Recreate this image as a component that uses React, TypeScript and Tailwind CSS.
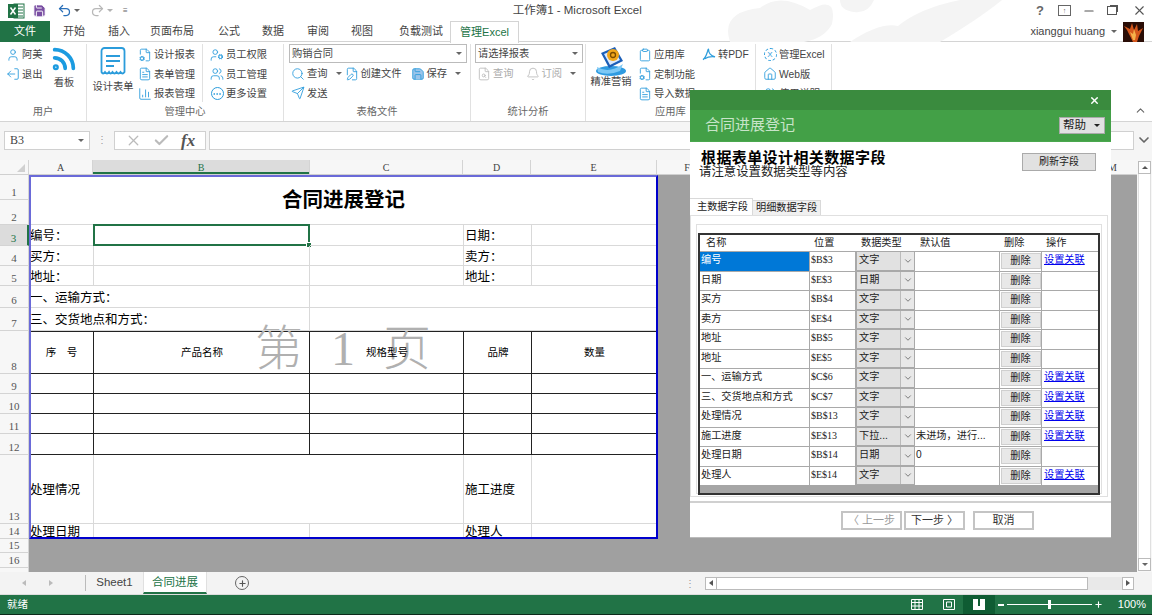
import React from 'react';
import {
  BarChart3, Bell, Check, ChevronDown, ChevronUp, Clipboard, Ellipsis, FileCog, FilePen, FileSearch, FileText, Home,
  LogOut, Minus, Plus, Redo2, Rss, Save, Search, Send, Undo2, User, Users, UserCog, X,
} from 'lucide-react';

const font = { cjk: "font-['Liberation_Sans','Noto_Sans_CJK_SC',sans-serif]" };
const blue = '#2b9cdb';

const Caret = ({ className = '' }: { className?: string }) => (
  <span className={`inline-block w-0 h-0 border-x-[3px] border-x-transparent border-t-[3px] border-t-[#666] ${className}`} />
);

const ExcelLogo = () => (
  <svg width="18" height="16" viewBox="0 0 18 16">
    <rect x="7" y="1" width="10" height="14" fill="#fff" stroke="#217346" />
    <path d="M11 4h5M11 7h5M11 10h5M11 13h5" stroke="#217346" />
    <rect x="1" y="1" width="10" height="14" fill="#217346" />
    <path d="M3.5 4.5l5 7M8.5 4.5l-5 7" stroke="#fff" strokeWidth="1.5" />
  </svg>
);

const FormIcon = () => (
  <svg width="26" height="30" viewBox="0 0 26 30" fill="none" stroke={blue} strokeWidth="1.8">
    <path d="M1.5 25V4a3 3 0 0 1 3-3h17a3 3 0 0 1 3 3v21q-2 3-4 0q-2 3-4 0q-2 3-4 0q-2 3-3.500 0q-2 3-4 0q-2 3-3.500 0z" />
    <path d="M6 9h14M6 14h14M6 19h8" />
  </svg>
);

const MailIcon = () => (
  <svg width="36" height="32" viewBox="0 0 36 32">
    <ellipse cx="18" cy="26" rx="15" ry="5" fill="#2f9be0" />
    <path d="M8 8l14-6 8 14-14 7z" fill="#1c5fb8" />
    <path d="M11 9l10-4 6 10-10 5z" fill="#dbeafe" />
    <circle cx="20" cy="10" r="6" fill="#f2a71b" />
    <circle cx="20" cy="10" r="2.500" fill="none" stroke="#7a4b00" strokeWidth="1.3" />
    <path d="M4 22q12 7 26-3l-3 7q-12 5-22 1z" fill="#7cc8f5" />
  </svg>
);

const PdfIcon = () => (
  <svg width="15" height="15" viewBox="0 0 15 15" fill="none" stroke={blue} strokeWidth="1.3">
    <path d="M1 13c2-1 3.500-4 5-9 .5-2 1-3 1-2 0 3 2 7 7 8-4-.5-8 0-11 2" />
  </svg>
);

const Clouds = () => (
  <svg className="absolute left-[720px] top-0" width="300" height="42" viewBox="0 0 300 42" fill="#f4f4f4">
    <path d="M10 42Q0 12 40 8Q60-8 90 10Q118-6 112 24Q105 38 84 42z" />
    <path d="M130 42Q160 22 178 26Q200 8 240 0L282 0Q260 18 220 42z" />
    <path d="M120 0h34q-6 14-20 12q-14-2-14-12z" />
  </svg>
);

const Avatar = () => (
  <svg width="21" height="20" viewBox="0 0 21 20">
    <rect width="21" height="20" fill="#2a0d06" />
    <path d="M10 20L4 8 1 4l6 3 2-6 2 7 3-6 1 7 5-3-4 8-2 6z" fill="#d4571c" />
    <path d="M10 18L7 10l3 2 1-5 2 6-1 5z" fill="#f6b24a" />
  </svg>
);

const Item = ({ icon, label, muted = false, caret = false, className = '' }: { icon: React.ReactNode; label: string; muted?: boolean; caret?: boolean; className?: string }) => (
  <div className={`flex items-center h-[19.500px] gap-[2px] whitespace-nowrap ${muted ? 'text-[#aaa]' : 'text-[#444]'} ${className}`}>
    <span className="w-[14px] h-[14px] flex items-center justify-center shrink-0">{icon}</span>
    <span>{label}</span>
    {caret && <Caret className="ml-[6px]" />}
  </div>
);

const Group = ({ label, className, children }: { label: string; className: string; children: React.ReactNode }) => (
  <div className={`h-full flex flex-col border-r border-[#e1e1e1] shrink-0 ${className}`}>
    <div className="flex-1 flex min-h-0">{children}</div>
    <div className="h-[17px] text-center text-[10.250px] text-[#666] leading-[15px]">{label}</div>
  </div>
);

const Combo = ({ text, className }: { text: string; className: string }) => (
  <div className={`h-[19px] border border-[#bbb] bg-white flex items-center justify-between px-[2px] text-[#444] ${className}`}>
    <span>{text}</span>
    <Caret className="mr-[2px]" />
  </div>
);

const ic = { size: 14, color: blue, strokeWidth: 1.5 };

const Ribbon = () => (
  <div className="h-[80px] flex bg-white border-b border-[#d4d4d4] text-[10.250px] pt-[2px] relative">
    <Group label="用户" className="w-[87px]">
      <div className="pl-[6px] pt-[1px] w-[50px]">
        <Item icon={<User {...ic} />} label="阿美" />
        <Item icon={<LogOut {...ic} className="rotate-180" />} label="退出" />
      </div>
      <div className="flex flex-col items-center pt-[1px] text-[#444]">
        <Rss size={28} color="#1b9be0" strokeWidth={3.200} />
        <span className="mt-[2px]">看板</span>
      </div>
    </Group>
    <Group label="管理中心" className="w-[197px]">
      <div className="w-[50px] ml-[1px] flex flex-col items-center pt-[3px] text-[#444]">
        <FormIcon />
        <span className="mt-[2px]">设计表单</span>
      </div>
      <div className="w-[68px] ml-[-3px] pl-[3px] pt-[1px] border-r border-[#e1e1e1] h-[58px]">
        <Item icon={<FileCog {...ic} />} label="设计报表" />
        <Item icon={<FileText {...ic} />} label="表单管理" />
        <Item icon={<BarChart3 {...ic} />} label="报表管理" />
      </div>
      <div className="pl-[7px] pt-[1px]">
        <Item icon={<UserCog {...ic} />} label="员工权限" />
        <Item icon={<Users {...ic} />} label="员工管理" />
        <Item icon={<span className="w-[13px] h-[13px] rounded-full border border-[#2b9cdb] flex items-center justify-center"><Ellipsis size={10} color={blue} /></span>} label="更多设置" />
      </div>
    </Group>
    <Group label="表格文件" className="w-[187px]">
      <div className="pl-[5px]">
        <Combo text="购销合同" className="w-[178px]" />
        <div className="flex pl-[2px] mt-[1px] gap-[3px]">
          <Item icon={<Search {...ic} />} label="查询" caret />
          <Item icon={<FilePen {...ic} />} label="创建文件" />
          <Item icon={<Save {...ic} fill="#9cc5ea" />} label="保存" caret className="ml-[6px]" />
        </div>
        <Item icon={<Send {...ic} />} label="发送" className="pl-[2px]" />
      </div>
    </Group>
    <Group label="统计分析" className="w-[115px]">
      <div className="pl-[4px]">
        <Combo text="请选择报表" className="w-[108px]" />
        <div className="flex pl-[2px] mt-[1px] gap-[12px]">
          <Item muted icon={<FileSearch size={14} color="#bbb" strokeWidth={1.500} />} label="查询" />
          <Item muted icon={<Bell size={14} color="#bbb" strokeWidth={1.500} />} label="订阅" caret />
        </div>
      </div>
    </Group>
    <Group label="应用库" className="w-[170px]">
      <div className="w-[50px] flex flex-col items-center pt-[1px] text-[#444]">
        <MailIcon />
        <span className="mt-[-3px]">精准营销</span>
      </div>
      <div className="w-[66px] pl-[2px] pt-[1px]">
        <Item icon={<Clipboard {...ic} />} label="应用库" />
        <Item icon={<FileCog {...ic} />} label="定制功能" />
        <Item icon={<FileText {...ic} />} label="导入数据" />
      </div>
      <div className="pt-[1px]">
        <Item icon={<PdfIcon />} label="转PDF" />
      </div>
    </Group>
    <Group label="管理" className="w-[76px]">
      <div className="pl-[7px] pt-[1px]">
        <Item icon={<span className="w-[13px] h-[13px] rounded-full border border-dashed border-[#2b9cdb] text-[8px] leading-[11px] text-center text-[#2b9cdb]">X</span>} label="管理Excel" />
        <Item icon={<Home {...ic} />} label="Web版" />
        <Item icon={<Users {...ic} />} label="使用说明" />
      </div>
    </Group>
    <ChevronUp size={13} color="#666" className="absolute left-[1134px] top-[62px]" />
  </div>
);

const tabs = [
  ['开始', 'w-[48px]'], ['插入', 'w-[42px]'], ['页面布局', 'w-[64px]'], ['公式', 'w-[50px]'],
  ['数据', 'w-[38px]'], ['审阅', 'w-[52px]'], ['视图', 'w-[36px]'], ['负载测试', 'w-[70px] pl-[12px]'],
];

const TitleBar = () => (
  <div className="relative h-[42px] bg-white border-b border-[#d4d4d4] shrink-0">
    <Clouds />
    <div className="relative h-[21px] flex items-center">
      <span className="ml-[7px]"><ExcelLogo /></span>
      <span className="ml-[7px]"><Save size={15} color="#fff" fill="#7a4fa3" strokeWidth={1.500} /></span>
      <span className="ml-[10px]"><Undo2 size={15} color="#2a6fb8" strokeWidth={2} /></span>
      <Caret className="ml-[2px]" />
      <span className="ml-[10px]"><Redo2 size={15} color="#b8b8b8" strokeWidth={2} /></span>
      <Caret className="ml-[2px] opacity-50" />
      <span className="ml-[10px] text-[8px] text-[#666] leading-none">≡</span>
      <span className="ml-[385px] text-[11.500px] text-[#444] whitespace-nowrap">工作簿1 - Microsoft Excel</span>
      <span className="ml-auto flex items-center text-[#555] gap-[11px] pr-[5px]">
        <span className="text-[13px] font-bold text-[#666] w-[14px] text-center">?</span>
        <span className="w-[13px] h-[11px] border border-[#666] flex items-center justify-center text-[7px] leading-none">↑</span>
        <Minus size={14} color="#555" />
        <span className="w-[10px] h-[9px] border border-[#555] shadow-[2px_-2px_0_-1px_#555]" />
        <X size={15} color="#555" strokeWidth={1.800} className="ml-[4px]" />
      </span>
    </div>
    <div className="relative h-[21px] flex items-stretch text-[11px] text-[#444]">
      <div className="w-[50px] bg-[#217346] text-white flex items-center justify-center">文件</div>
      {tabs.map(([t, w]) => (
        <div key={t} className={`${w} flex items-center justify-center`}>{t}</div>
      ))}
      <div className="w-[69px] bg-white border border-b-0 border-[#d4d4d4] text-[#217346] flex items-center justify-center z-10 h-[22px]">管理Excel</div>
      <div className="ml-auto flex items-center pr-[8px] text-[11px] text-[#444]">
        <span>xianggui huang</span>
        <Caret className="ml-[6px] mr-[6px]" />
        <Avatar />
      </div>
    </div>
  </div>
);

const FormulaBar = () => (
  <div className="h-[38px] bg-[#f5f5f5] flex items-center pl-[4px] pb-[2px] shrink-0 text-[#444]">
    <div className="w-[86px] h-[19px] bg-white border border-[#d0d0d0] flex items-center justify-between px-[5px] text-[12px] font-['Liberation_Serif',serif]">
      <span>B3</span>
      <Caret />
    </div>
    <div className="w-[24px] text-center text-[10px] text-[#999] leading-none">⋮</div>
    <div className="w-[92px] h-[19px] bg-white border border-[#d0d0d0] flex items-center justify-around px-[4px]">
      <X size={17} color="#bbb" strokeWidth={1.800} />
      <Check size={17} color="#bbb" strokeWidth={3} />
      <span className="font-['Liberation_Serif',serif] italic text-[17px] font-bold leading-none text-[#555]">fx</span>
    </div>
    <div className="ml-[3px] w-[926px] h-[19px] bg-white border border-[#d0d0d0]" />
    <ChevronDown size={16} color="#666" strokeWidth={2.500} className="ml-[2px]" />
  </div>
);

const colW = { a: 'w-[65px]', b: 'w-[216px]', c: 'w-[154px]', d: 'w-[68px]', e: 'w-[125px]' };

const Cell = ({ w, text, black, center, small, children }: { w: string; text?: string; black?: boolean; center?: boolean; small?: boolean; children?: React.ReactNode }) => (
  <div className={`${w} shrink-0 relative border-r border-b flex items-center whitespace-nowrap pl-[1px] ${black ? 'border-[#222]' : 'border-[#d9d9d9]'} ${center ? 'justify-center' : 'pt-[3px]'} ${small ? 'text-[10.500px]' : 'text-[12.500px]'}`}>
    {text}
    {children}
  </div>
);

const rowNums = [
  ['1', 'h-[25px]'], ['2', 'h-[25px]'], ['3', 'h-[21px]'], ['4', 'h-[20px]'], ['5', 'h-[20px]'], ['6', 'h-[22px]'], ['7', 'h-[23px]'],
  ['8', 'h-[43px]'], ['9', 'h-[20px]'], ['10', 'h-[20px]'], ['11', 'h-[20px]'], ['12', 'h-[21px]'], ['13', 'h-[69px]'], ['14', 'h-[15px]'], ['15', 'h-[14px]'], ['16', 'h-[15px]'],
];

const Sheet = () => (
  <div className="flex-1 flex min-h-0">
    <div className="flex-1 flex flex-col min-w-0 bg-[#a0a0a0]">
      <div className="h-[15px] flex bg-[#f7f7f7] text-[10px] font-['Liberation_Serif',serif] text-[#444] shrink-0 border-b border-[#d0d0d0]">
        <div className="w-[29px] border-r border-[#d4d4d4] flex justify-end items-end pr-[3px] pb-[2px]">
          <span className="w-0 h-0 border-l-[8px] border-l-transparent border-b-[8px] border-b-[#d0d0d0]" />
        </div>
        <div className="w-[64px] text-center border-r border-[#d4d4d4]">A</div>
        <div className={`${colW.b} text-center bg-[#dcdcdc] text-[#217346] border-b-2 border-[#217346]`}>B</div>
        <div className={`${colW.c} text-center border-x border-[#d4d4d4]`}>C</div>
        <div className={`${colW.d} text-center border-r border-[#d4d4d4]`}>D</div>
        <div className="w-[126px] text-center border-r border-[#d4d4d4]">E</div>
        <div className="w-[60px] text-center">F</div>
        <div className="flex-1 text-right pr-[20px]">M</div>
      </div>
      <div className="flex-1 flex min-h-0">
        <div className="w-[29px] shrink-0 bg-[#f7f7f7] flex flex-col text-[11px] text-[#555] font-['Liberation_Serif',serif]">
          {rowNums.map(([n, h]) => (
            <div key={n} className={`${h} shrink-0 flex items-end justify-center border-b border-r border-[#d4d4d4] leading-[14px] ${n === '3' ? 'bg-[#dcdcdc] text-[#217346] border-r-2 border-r-[#217346]' : ''}`}>{n}</div>
          ))}
          <div className="flex-1 border-r border-[#d4d4d4]" />
        </div>
        <div className="relative w-[629px] h-[364px] bg-white text-black font-['Liberation_Serif','Noto_Sans_CJK_SC',serif] shrink-0">
          <div className="absolute left-[226px] top-[150px] text-[48px] leading-none font-light text-[#b0b0b0] whitespace-pre [word-spacing:16px] pointer-events-none">第 1 页</div>
          <div className="h-[50px] flex items-center justify-center border-b border-[#d9d9d9] text-[20.500px] font-bold pt-[1px]">合同进展登记</div>
          {[['编号：', '日期：', 'h-[21px]'], ['买方：', '卖方：', 'h-[20px]'], ['地址：', '地址：', 'h-[20px]']].map(([l, r, h], i) => (
            <div key={l + i} className={`${h} flex`}>
              <Cell w={colW.a} text={l} />
              <Cell w={colW.b}>
                {i === 0 && (
                  <div className="absolute inset-[-1px] border-2 border-[#217346]">
                    <span className="absolute right-[-4px] bottom-[-4px] w-[6px] h-[6px] bg-[#217346] border border-white" />
                  </div>
                )}
              </Cell>
              <Cell w={colW.c} />
              <Cell w={colW.d} text={r} />
              <Cell w={colW.e} />
            </div>
          ))}
          <div className="h-[22px] flex">
            <Cell w="w-[281px]" text="一、运输方式：" />
            <Cell w="w-[347px]" />
          </div>
          <div className="h-[23px] flex">
            <Cell w="w-[281px]" text="三、交货地点和方式：" />
            <Cell w="w-[347px]" />
          </div>
          <div className="h-[43px] flex border-t border-[#222]">
            <Cell black center small w={colW.a} text="序　号" />
            <Cell black center small w={colW.b} text="产品名称" />
            <Cell black center small w={colW.c} text="规格型号" />
            <Cell black center small w={colW.d} text="品牌" />
            <Cell black center small w={colW.e} text="数量" />
          </div>
          {['h-[20px]', 'h-[20px]', 'h-[20px]', 'h-[21px]'].map((h, i) => (
            <div key={i} className={`${h} flex`}>
              <Cell black w={colW.a} />
              <Cell black w={colW.b} />
              <Cell black w={colW.c} />
              <Cell black w={colW.d} />
              <Cell black w={colW.e} />
            </div>
          ))}
          <div className="h-[69px] flex">
            <Cell w={colW.a} text="处理情况" />
            <Cell w="w-[370px]" />
            <Cell w={colW.d} text="施工进度" />
            <Cell w={colW.e} />
          </div>
          <div className="h-[15px] flex overflow-hidden">
            <Cell w={colW.a} text="处理日期" />
            <Cell w={colW.b} />
            <Cell w={colW.c} />
            <Cell w={colW.d} text="处理人" />
            <Cell w={colW.e} />
          </div>
          <div className="absolute inset-0 border-2 border-[#0000cc] border-t-[#6a6ad8] border-l-[#6a6ad8] pointer-events-none" />
        </div>
      </div>
    </div>
    <div className="w-[15px] bg-[#f7f7f7] flex flex-col items-center justify-between py-[1px] shrink-0">
      <div className="w-[13px] h-[13px] bg-white border border-[#bbb] flex items-center justify-center"><span className="w-0 h-0 border-x-[3px] border-x-transparent border-b-[3px] border-b-[#555]" /></div>
      <div className="w-[13px] flex-1 bg-white border-x border-[#e0e0e0]" />
      <div className="w-[13px] h-[13px] bg-white border border-[#bbb] flex items-center justify-center"><Caret /></div>
    </div>
  </div>
);

const TabBar = () => (
  <div className="h-[23px] bg-[#f3f3f3] flex items-center shrink-0 text-[11.500px] text-[#444] border-b border-[#ddd]">
    <span className="ml-[22px] w-0 h-0 border-y-[3px] border-y-transparent border-r-[4px] border-r-[#bbb]" />
    <span className="ml-[23px] w-0 h-0 border-y-[3px] border-y-transparent border-l-[4px] border-l-[#bbb]" />
    <span className="ml-[32px] h-[16px] border-l border-[#bbb]" />
    <span className="w-[57px] text-center">Sheet1</span>
    <span className="w-[64px] h-full bg-white text-[#217346] text-center leading-[20px] border-b-2 border-[#217346] border-x border-x-[#e0e0e0]">合同进展</span>
    <span className="ml-[28px] w-[14px] h-[14px] rounded-full border border-[#666] flex items-center justify-center"><Plus size={9} color="#555" strokeWidth={3} /></span>
    <span className="ml-[436px] text-[10px] text-[#999]">⋮</span>
    <div className="ml-[10px] w-[429px] h-[13px] bg-[#e9e9e9] flex items-stretch">
      <div className="w-[12px] bg-white border border-[#bbb] flex items-center justify-center"><span className="w-0 h-0 border-y-[3px] border-y-transparent border-r-[4px] border-r-[#555]" /></div>
      <div className="w-[371px] bg-white border-y border-r border-[#bbb]" />
      <div className="ml-auto w-[12px] bg-white border border-[#bbb] flex items-center justify-center"><span className="w-0 h-0 border-y-[3px] border-y-transparent border-l-[4px] border-l-[#555]" /></div>
    </div>
  </div>
);

const StatusBar = () => (
  <div className="h-[20px] bg-[#217346] border-b border-[#0c2b1a] text-white flex items-center shrink-0 text-[10.500px]">
    <span className="ml-[7px]">就绪</span>
    <div className="ml-auto flex items-center h-full">
      <svg width="12" height="11" viewBox="0 0 12 11" fill="none" stroke="#fff"><path d="M.5.5h11v10H.5zM4 .5v10M8 .5v10M.5 3.500h11M.5 7h11" /></svg>
      <svg className="ml-[20px]" width="12" height="11" viewBox="0 0 12 11" fill="none" stroke="#fff"><path d="M.5.5h11v10H.5zM3.500 3h5v5h-5z" /></svg>
      <div className="ml-[8px] w-[32px] h-full bg-[#0f5c33] flex items-center justify-center">
        <svg width="12" height="11" viewBox="0 0 12 11" fill="#fff"><path d="M0 0h5v7h2V0h5v11H0z" /></svg>
      </div>
      <span className="ml-[3px] w-[6px] h-[2px] bg-white" />
      <div className="relative ml-[3px] w-[85px] h-[1px] bg-white">
        <span className="absolute left-[41px] top-[-4px] w-[3px] h-[9px] bg-white" />
      </div>
      <Plus size={9} strokeWidth={3} className="ml-[2px]" />
      <span className="ml-[15px] mr-[6px] text-[11px] font-['Liberation_Sans',sans-serif]">100%</span>
    </div>
  </div>
);

interface FieldRow { name: string; pos: string; type?: string; def?: string; link?: boolean; sel?: boolean }

const fields: FieldRow[] = [
  { name: '编号', pos: '$B$3', link: true, sel: true },
  { name: '日期', pos: '$E$3', type: '日期' },
  { name: '买方', pos: '$B$4' },
  { name: '卖方', pos: '$E$4' },
  { name: '地址', pos: '$B$5' },
  { name: '地址', pos: '$E$5' },
  { name: '一、运输方式', pos: '$C$6', link: true },
  { name: '三、交货地点和方式', pos: '$C$7', link: true },
  { name: '处理情况', pos: '$B$13', link: true },
  { name: '施工进度', pos: '$E$13', type: '下拉...', def: '未进场，进行...', link: true },
  { name: '处理日期', pos: '$B$14', type: '日期', def: '0' },
  { name: '处理人', pos: '$E$14', link: true },
];

const cols = 'grid grid-cols-[110px_46px_59px_85px_42px_58px]';

const FieldTable = () => (
  <div className="h-[262px] border-2 border-[#333] bg-[#a6a6a6] text-[10.200px] text-[#222]">
    <div className={`${cols} h-[16px] bg-white leading-[15px]`}>
      <span className="pl-[6px]">名称</span>
      <span className="pl-[4px]">位置</span>
      <span className="pl-[5px]">数据类型</span>
      <span className="pl-[5px]">默认值</span>
      <span className="pl-[4px]">删除</span>
      <span className="pl-[4px]">操作</span>
    </div>
    {fields.map((f, i) => (
      <div key={i} className={`${cols} h-[19.500px] bg-white border-t border-[#a9a9a9] leading-[16px]`}>
        <span className={`pl-[1px] whitespace-nowrap border-r border-[#a9a9a9] ${f.sel ? 'bg-[#0078d7] text-white' : ''}`}>{f.name}</span>
        <span className="pl-[1px] border-r border-[#a9a9a9] text-[10px] font-['Liberation_Serif',serif]">{f.pos}</span>
        <div className="flex bg-[#e1e1e1] border-x border-b border-[#a9a9a9] pl-[2px] items-stretch justify-between">
          <span>{f.type ?? '文字'}</span>
          <span className="w-[14px] border-l border-[#bbb] flex items-center justify-center bg-[#e8e8e8]"><ChevronDown size={10} color="#666" /></span>
        </div>
        <span className="pl-[1px] border-r border-[#a9a9a9] whitespace-nowrap overflow-hidden">{f.def}</span>
        <div className="flex items-center justify-center border-r border-[#a9a9a9]">
          <span className="w-[40px] h-[16px] leading-[14px] bg-[#e8e8e8] border border-[#cfcfcf] text-center">删除</span>
        </div>
        <span className="pl-[2px]">{f.link && <span className="underline text-[#0000ee]">设置关联</span>}</span>
      </div>
    ))}
  </div>
);

const WizardBtn = ({ label, disabled, className = '' }: { label: string; disabled?: boolean; className?: string }) => (
  <div className={`w-[61px] h-[19px] border-2 border-[#c4c4c4] bg-white text-[11px] leading-[15px] text-center whitespace-pre ${disabled ? 'text-[#999]' : 'text-[#333]'} ${className}`}>{label}</div>
);

const Dialog = () => (
  <div className={`absolute left-[690px] top-[90px] w-[421px] h-[448px] bg-white border-b border-[#bbb] flex flex-col ${font.cjk}`}>
    <div className="h-[20px] bg-[#3a8b3e] flex items-center justify-end pr-[11px]">
      <X size={11} color="#fff" strokeWidth={3} />
    </div>
    <div className="h-[32px] bg-[#43a047] flex items-center justify-between pl-[15px] pr-[6px] border-b border-[#4aa84e]">
      <span className="text-[15px] text-[#c8e4c9]">合同进展登记</span>
      <div className="w-[46px] h-[17px] bg-[#e1e1e1] border border-[#aaa] flex items-center justify-between pl-[3px] pr-[4px] text-[11.500px] text-[#222]">
        <span>帮助</span>
        <span className="w-0 h-0 border-x-[3px] border-x-transparent border-t-[3px] border-t-[#222]" />
      </div>
    </div>
    <div className="flex justify-between pl-[11px] pr-[15px] pt-[7px] h-[56px]">
      <div>
        <div className="text-[15px] leading-[17px] font-bold text-black tracking-[0.400px]">根据表单设计相关数据字段</div>
        <div className="text-[12.400px] leading-[13px] text-[#222] ml-[-2px]">请注意设置数据类型等内容</div>
      </div>
      <div className="mt-[4px] w-[74px] h-[18px] bg-[#e1e1e1] border border-[#aaa] text-center text-[10px] leading-[15px] text-[#222]">刷新字段</div>
    </div>
    <div className="flex h-[17px] items-end text-[10.200px] text-[#222] whitespace-nowrap">
      <div className="w-[63px] h-[17px] bg-white border-t border-r border-[#d9d9d9] pl-[7px] leading-[15px] relative z-10">主数据字段</div>
      <div className="w-[68px] h-[15px] bg-[#f0f0f0] border-t border-r border-[#d9d9d9] pl-[3px] leading-[14px]">明细数据字段</div>
    </div>
    <div className="w-[418px] h-[282px] border border-[#e0e0e0] px-[5px] pt-[8px] pb-[2px]">
      <div className="h-[270px] border border-[#e0e0e0] pt-[8px] px-[1px]">
        <FieldTable />
      </div>
    </div>
    <div className="h-[6px] border-b-2 border-[#d0d0d0]" />
    <div className="flex pl-[151px] pt-[8px] gap-[2px]">
      <WizardBtn disabled label="〈 上一步" />
      <WizardBtn label="下一步 〉" />
      <WizardBtn label="取消" className="ml-[6px]" />
    </div>
  </div>
);

export default function App() {
  return (
    <div className={`relative w-[1152px] h-[615px] overflow-hidden flex flex-col bg-white ${font.cjk}`}>
      <TitleBar />
      <Ribbon />
      <FormulaBar />
      <Sheet />
      <TabBar />
      <StatusBar />
      <Dialog />
    </div>
  );
}
